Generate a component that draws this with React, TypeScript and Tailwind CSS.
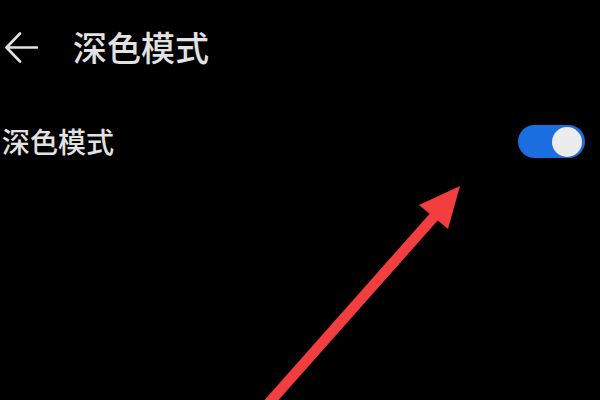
import React from "react";

export default function App() {
  return (
    <div
      className="relative w-[600px] h-[400px] bg-black overflow-hidden text-[#e2e2e2]"
      style={{ fontFamily: '"Noto Sans CJK SC", "Noto Sans", sans-serif' }}
    >
      <div className="flex items-center h-[94px] pl-[5px]">
        <svg width="33" height="31" viewBox="0 0 33 31" fill="none" className="shrink-0">
          <path d="M15 1.5 L1.5 15.5 L15 29.5 M1.5 15.5 H32" stroke="#e2e2e2" strokeWidth="2.6" strokeLinecap="round" strokeLinejoin="round" />
        </svg>
        <div className="ml-[35px] text-[34px] leading-none font-medium">深色模式</div>
      </div>
      <div className="flex items-center justify-between h-[94px] pl-[2px] pr-[15px]">
        <div className="text-[28px] leading-none font-medium">深色模式</div>
        <div className="relative w-[67px] h-[33px] rounded-full bg-[#1b6ee0]">
          <div className="absolute right-[3px] top-[2px] w-[30px] h-[30px] rounded-full bg-[#ececec]" />
        </div>
      </div>
      <svg className="absolute left-0 top-0" width="600" height="400" viewBox="0 0 600 400">
        <line x1="268" y1="404" x2="440" y2="210" stroke="#f23e3e" strokeWidth="10.5" />
        <polygon points="460,186 419,205 448,229" fill="#f23e3e" />
      </svg>
    </div>
  );
}
